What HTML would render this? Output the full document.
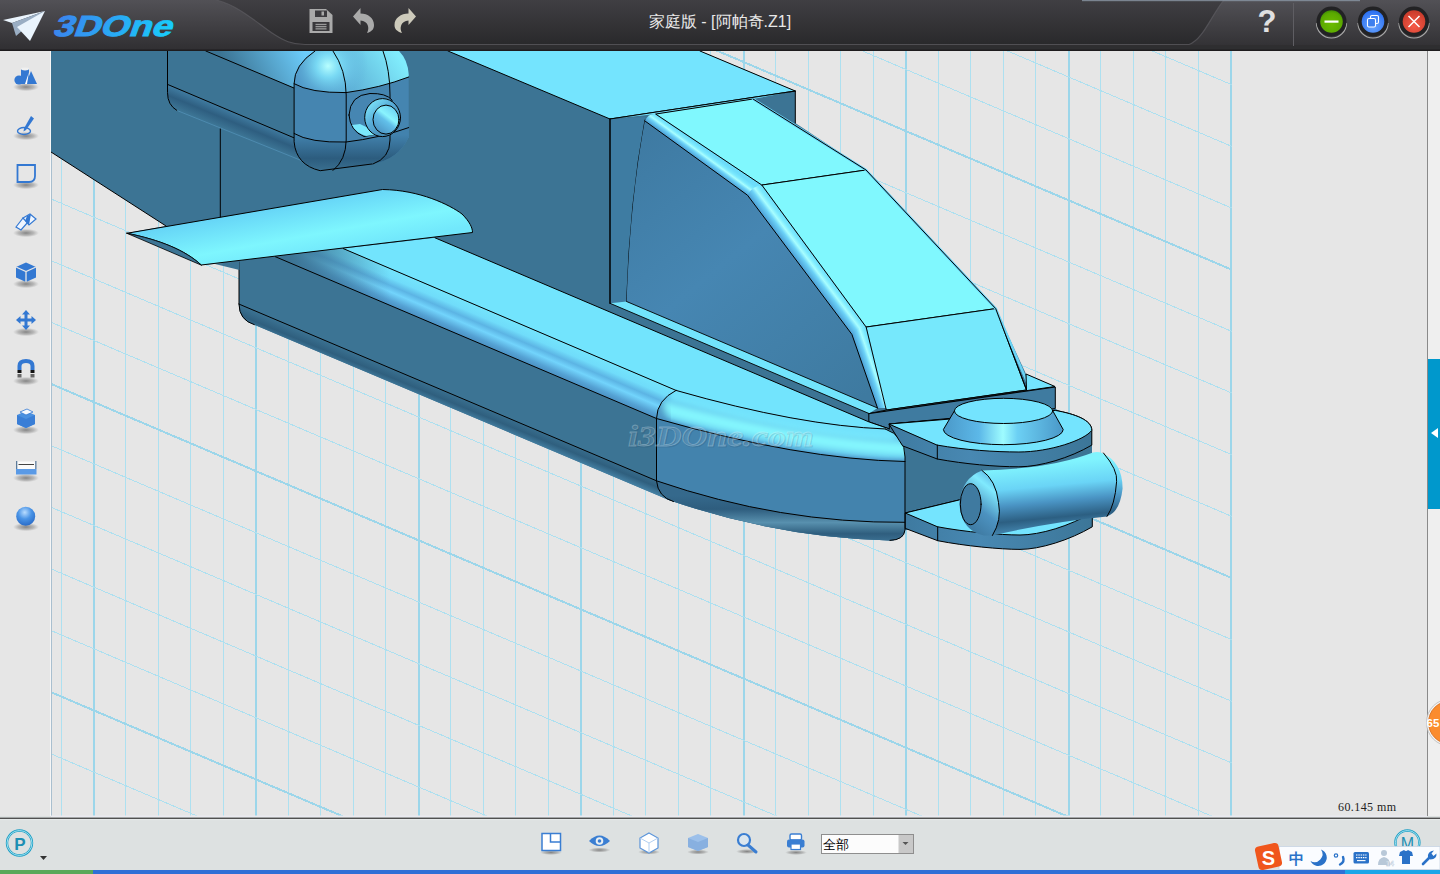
<!DOCTYPE html><html><head><meta charset="utf-8"><style>
html,body{margin:0;padding:0;}
body{width:1440px;height:874px;overflow:hidden;position:relative;background:#e6e6e6;font-family:"Liberation Sans",sans-serif;}
.abs{position:absolute;}
svg{position:absolute;left:0;top:0;}
</style></head><body>

<svg width="1440" height="874" viewBox="0 0 1440 874">
<defs></defs>

<rect x="0" y="0" width="1440" height="874" fill="#e6e6e6"/>
<clipPath id="vp"><rect x="51" y="51" width="1376.5" height="765"/></clipPath>
<g clip-path="url(#vp)">
<g shape-rendering="crispEdges">
<rect x="61" y="51" width="1" height="765" fill="#ade0f0"/>
<rect x="93" y="51" width="2" height="765" fill="#9cd6ea"/>
<rect x="125" y="51" width="1" height="765" fill="#ade0f0"/>
<rect x="158" y="51" width="1" height="765" fill="#ade0f0"/>
<rect x="190" y="51" width="1" height="765" fill="#ade0f0"/>
<rect x="223" y="51" width="1" height="765" fill="#ade0f0"/>
<rect x="255" y="51" width="2" height="765" fill="#9cd6ea"/>
<rect x="288" y="51" width="1" height="765" fill="#ade0f0"/>
<rect x="320" y="51" width="1" height="765" fill="#ade0f0"/>
<rect x="353" y="51" width="1" height="765" fill="#ade0f0"/>
<rect x="385" y="51" width="1" height="765" fill="#ade0f0"/>
<rect x="418" y="51" width="2" height="765" fill="#9cd6ea"/>
<rect x="450" y="51" width="1" height="765" fill="#ade0f0"/>
<rect x="483" y="51" width="1" height="765" fill="#ade0f0"/>
<rect x="515" y="51" width="1" height="765" fill="#ade0f0"/>
<rect x="548" y="51" width="1" height="765" fill="#ade0f0"/>
<rect x="580" y="51" width="2" height="765" fill="#9cd6ea"/>
<rect x="613" y="51" width="1" height="765" fill="#ade0f0"/>
<rect x="645" y="51" width="1" height="765" fill="#ade0f0"/>
<rect x="678" y="51" width="1" height="765" fill="#ade0f0"/>
<rect x="710" y="51" width="1" height="765" fill="#ade0f0"/>
<rect x="743" y="51" width="2" height="765" fill="#9cd6ea"/>
<rect x="775" y="51" width="1" height="765" fill="#ade0f0"/>
<rect x="808" y="51" width="1" height="765" fill="#ade0f0"/>
<rect x="840" y="51" width="1" height="765" fill="#ade0f0"/>
<rect x="873" y="51" width="1" height="765" fill="#ade0f0"/>
<rect x="905" y="51" width="2" height="765" fill="#9cd6ea"/>
<rect x="938" y="51" width="1" height="765" fill="#ade0f0"/>
<rect x="970" y="51" width="1" height="765" fill="#ade0f0"/>
<rect x="1003" y="51" width="1" height="765" fill="#ade0f0"/>
<rect x="1035" y="51" width="1" height="765" fill="#ade0f0"/>
<rect x="1068" y="51" width="2" height="765" fill="#9cd6ea"/>
<rect x="1100" y="51" width="1" height="765" fill="#ade0f0"/>
<rect x="1133" y="51" width="1" height="765" fill="#ade0f0"/>
<rect x="1165" y="51" width="1" height="765" fill="#ade0f0"/>
<rect x="1198" y="51" width="1" height="765" fill="#ade0f0"/>
<rect x="1230" y="51" width="2" height="765" fill="#9cd6ea"/>
<line x1="51" y1="-417.68" x2="1232" y2="84.84" stroke="#ade0f0" stroke-width="1"/>
<line x1="51" y1="-356.02" x2="1232" y2="146.50" stroke="#ade0f0" stroke-width="1"/>
<line x1="51" y1="-294.36" x2="1232" y2="208.16" stroke="#ade0f0" stroke-width="1"/>
<line x1="51" y1="-232.70" x2="1232" y2="269.82" stroke="#9cd6ea" stroke-width="2"/>
<line x1="51" y1="-171.04" x2="1232" y2="331.48" stroke="#ade0f0" stroke-width="1"/>
<line x1="51" y1="-109.38" x2="1232" y2="393.14" stroke="#ade0f0" stroke-width="1"/>
<line x1="51" y1="-47.72" x2="1232" y2="454.80" stroke="#ade0f0" stroke-width="1"/>
<line x1="51" y1="13.94" x2="1232" y2="516.46" stroke="#ade0f0" stroke-width="1"/>
<line x1="51" y1="75.60" x2="1232" y2="578.12" stroke="#9cd6ea" stroke-width="2"/>
<line x1="51" y1="137.26" x2="1232" y2="639.78" stroke="#ade0f0" stroke-width="1"/>
<line x1="51" y1="198.92" x2="1232" y2="701.44" stroke="#ade0f0" stroke-width="1"/>
<line x1="51" y1="260.58" x2="1232" y2="763.10" stroke="#ade0f0" stroke-width="1"/>
<line x1="51" y1="322.24" x2="1232" y2="824.76" stroke="#ade0f0" stroke-width="1"/>
<line x1="51" y1="383.90" x2="1232" y2="886.42" stroke="#9cd6ea" stroke-width="2"/>
<line x1="51" y1="445.56" x2="1232" y2="948.08" stroke="#ade0f0" stroke-width="1"/>
<line x1="51" y1="507.22" x2="1232" y2="1009.74" stroke="#ade0f0" stroke-width="1"/>
<line x1="51" y1="568.88" x2="1232" y2="1071.40" stroke="#ade0f0" stroke-width="1"/>
<line x1="51" y1="630.54" x2="1232" y2="1133.06" stroke="#ade0f0" stroke-width="1"/>
<line x1="51" y1="692.20" x2="1232" y2="1194.72" stroke="#9cd6ea" stroke-width="2"/>
<line x1="51" y1="753.86" x2="1232" y2="1256.38" stroke="#ade0f0" stroke-width="1"/>
<line x1="51" y1="815.52" x2="1232" y2="1318.04" stroke="#ade0f0" stroke-width="1"/>
</g>
<defs>
<linearGradient id="gWing" gradientUnits="userSpaceOnUse" x1="300" y1="200" x2="310" y2="255"><stop offset="0" stop-color="#64d2f6"/><stop offset="0.65" stop-color="#7ef6fe"/><stop offset="1" stop-color="#72e8fc"/></linearGradient>
<linearGradient id="gSide" gradientUnits="userSpaceOnUse" x1="640" y1="130" x2="860" y2="400"><stop offset="0" stop-color="#3e7aa2"/><stop offset="0.45" stop-color="#4686b2"/><stop offset="1" stop-color="#3e7aa0"/></linearGradient>
<linearGradient id="gRound" gradientUnits="userSpaceOnUse" x1="460" y1="298.3" x2="446.5" y2="330"><stop offset="0" stop-color="#74e4fc"/><stop offset="0.25" stop-color="#70dcfa"/><stop offset="0.45" stop-color="#5cb4e4"/><stop offset="0.62" stop-color="#72d4fc"/><stop offset="0.85" stop-color="#55a2d4"/><stop offset="1" stop-color="#4a8ec0"/></linearGradient>
<linearGradient id="gRoundFade" gradientUnits="userSpaceOnUse" x1="290" y1="0" x2="390" y2="0"><stop offset="0" stop-color="#3c7494" stop-opacity="1"/><stop offset="1" stop-color="#3c7494" stop-opacity="0"/></linearGradient>
<linearGradient id="gNoseTop" x1="0" y1="0" x2="0.15" y2="1"><stop offset="0" stop-color="#74e6fc"/><stop offset="0.4" stop-color="#80f4fe"/><stop offset="0.7" stop-color="#5cb4e4"/><stop offset="1" stop-color="#4a90c0"/></linearGradient>
<linearGradient id="gNoseBot" x1="0" y1="0.25" x2="0" y2="1"><stop offset="0" stop-color="#35698c"/><stop offset="0.3" stop-color="#2e5d7e"/><stop offset="0.6" stop-color="#5890ae"/><stop offset="0.85" stop-color="#2f5e7e"/><stop offset="1" stop-color="#3a6e90"/></linearGradient>
<linearGradient id="gBot" gradientUnits="userSpaceOnUse" x1="460" y1="395" x2="453" y2="412"><stop offset="0" stop-color="#3c7494"/><stop offset="0.55" stop-color="#2f5f7e"/><stop offset="1" stop-color="#4886aa"/></linearGradient>
<linearGradient id="gCanEdge" gradientUnits="userSpaceOnUse" x1="700" y1="165" x2="708" y2="154"><stop offset="0" stop-color="#56b4e6"/><stop offset="0.55" stop-color="#92faff"/><stop offset="1" stop-color="#6ad8fa"/></linearGradient>
<linearGradient id="gCanEdge2" gradientUnits="userSpaceOnUse" x1="870" y1="370" x2="885" y2="366"><stop offset="0" stop-color="#56b4e6"/><stop offset="0.55" stop-color="#a0fcff"/><stop offset="1" stop-color="#6ad8fa"/></linearGradient>
<linearGradient id="gCyl" gradientUnits="userSpaceOnUse" x1="1040" y1="464" x2="1046" y2="528"><stop offset="0" stop-color="#80f4fe"/><stop offset="0.35" stop-color="#6ad4f6"/><stop offset="0.6" stop-color="#4a94c4"/><stop offset="0.85" stop-color="#2c5f82"/><stop offset="1" stop-color="#3f7ea6"/></linearGradient>
<linearGradient id="gBoss" gradientUnits="userSpaceOnUse" x1="943" y1="0" x2="1063" y2="0"><stop offset="0" stop-color="#4a98c8"/><stop offset="0.3" stop-color="#5cb8e8"/><stop offset="0.5" stop-color="#9efcff"/><stop offset="0.62" stop-color="#6cd0f4"/><stop offset="1" stop-color="#4a98c8"/></linearGradient>
<linearGradient id="gPlateSide" x1="0" y1="0" x2="1" y2="0"><stop offset="0" stop-color="#3e7aa0"/><stop offset="0.4" stop-color="#4888b2"/><stop offset="1" stop-color="#3c7698"/></linearGradient>
<radialGradient id="gCapTop" gradientUnits="userSpaceOnUse" cx="328" cy="66" r="40"><stop offset="0" stop-color="#b8ffff" stop-opacity="1"/><stop offset="0.3" stop-color="#80e4fc" stop-opacity="0.8"/><stop offset="1" stop-color="#5aa8d8" stop-opacity="0"/></radialGradient>
<linearGradient id="gCapTopR" gradientUnits="userSpaceOnUse" x1="320" y1="95" x2="390" y2="45"><stop offset="0" stop-color="#4d94c4"/><stop offset="1" stop-color="#80ecfc"/></linearGradient>
<linearGradient id="gCapBot" gradientUnits="userSpaceOnUse" x1="0" y1="135" x2="0" y2="171"><stop offset="0" stop-color="#4282ad"/><stop offset="0.65" stop-color="#2c5c7e"/><stop offset="1" stop-color="#3a7090"/></linearGradient>
<linearGradient id="gPodBot" gradientUnits="userSpaceOnUse" x1="230" y1="111" x2="223" y2="128"><stop offset="0" stop-color="#3f7a9f"/><stop offset="0.5" stop-color="#2e5e80"/><stop offset="1" stop-color="#3c7494"/></linearGradient>
<linearGradient id="gPodTop" gradientUnits="userSpaceOnUse" x1="235" y1="80" x2="300" y2="45"><stop offset="0" stop-color="#3c7494"/><stop offset="1" stop-color="#6cccfa"/></linearGradient>
</defs>
<g stroke-linejoin="round" stroke-linecap="round">
<rect x="51" y="51" width="1" height="765" fill="#a9bfcf"/>
<!-- main dark silhouette -->
<path d="M51,51 L700,51 L795.3,91 L795.3,123 L866,170 L930,240 L995.7,308.6 L1026,374 L1055,386.5 L1055,408.6 L1092,430 L1092,527 L905,530 Q904,540 890,540.4 Q779,537.9 668,499.8 L660,496.3 L254.3,324.7 Q239,320 239,304 L239,262 L201,265 L127,233 L166,226 L51,152 Z" fill="#3c7494"/>
<!-- top cyan strip -->
<path d="M448,51 L700,51 L795.3,91 L610,119 Z" fill="#74e4fe"/>
<path d="M448,51 L610,119 L795.3,91 L795.3,123 M700,51 L795.3,91" fill="none" stroke="#000" stroke-width="1"/>
<!-- cockpit back wall -->
<path d="M610,119 L645,117 Q630,200 626.6,301.5 L610,303.3 Z" fill="#3e7ca2"/>
<path d="M610,119 L610,303.3 M645,120 Q630,200 626.6,301.5" fill="none" stroke="#000" stroke-width="1"/>
<!-- cockpit side face -->
<path d="M645,120 L747.5,195.2 L851.9,334.4 L877.5,408 L626.6,301.5 Q630,200 645,120 Z" fill="url(#gSide)"/>
<!-- sill -->
<path d="M610,303.3 L626.6,301.5 L877.5,408 L869.2,413.6 Z" fill="#72e4fc"/>
<path d="M610,303.3 L869.2,413.6 M626.6,301.5 L877.5,408" fill="none" stroke="#000" stroke-width="0.9"/>
<!-- canopy rounded edge -->
<defs><linearGradient id="gCE0" gradientUnits="userSpaceOnUse" x1="696.2" y1="158.1" x2="703.4" y2="148.3"><stop offset="0" stop-color="#4c9ed4"/><stop offset="0.35" stop-color="#6cd2f8"/><stop offset="0.55" stop-color="#a8feff"/><stop offset="0.75" stop-color="#7ceafe"/><stop offset="1" stop-color="#6cdcfa"/></linearGradient><linearGradient id="gCE1" gradientUnits="userSpaceOnUse" x1="799.7" y1="264.8" x2="814.0" y2="254.1"><stop offset="0" stop-color="#4c9ed4"/><stop offset="0.35" stop-color="#6cd2f8"/><stop offset="0.55" stop-color="#a8feff"/><stop offset="0.75" stop-color="#7ceafe"/><stop offset="1" stop-color="#6cdcfa"/></linearGradient><linearGradient id="gCE2" gradientUnits="userSpaceOnUse" x1="864.7" y1="371.2" x2="880.0" y2="365.9"><stop offset="0" stop-color="#4c9ed4"/><stop offset="0.35" stop-color="#6cd2f8"/><stop offset="0.55" stop-color="#a8feff"/><stop offset="0.75" stop-color="#7ceafe"/><stop offset="1" stop-color="#6cdcfa"/></linearGradient></defs>
<path d="M645,121 Q648,113 656,114 L762.2,185 L747.5,195.2 Z" fill="url(#gCE0)"/>
<path d="M747.5,195.2 Q752,186 762.2,185 L866.5,327 L851.9,334.4 Z" fill="url(#gCE1)"/>
<path d="M851.9,334.4 Q856,328 866.5,327 L886.7,408 L877.5,408 Z" fill="url(#gCE2)"/>
<path d="M645,121 L747.5,195.2 L851.9,334.4 L877.5,408" fill="none" stroke="#000" stroke-width="1"/>
<!-- canopy panels -->
<path d="M610,119 L656,114 L753,99 L795.3,91 Z" fill="#74e4fe"/>
<path d="M656,114 L753,99 L866,170 L762.2,185 Z" fill="#80f8fe" stroke="#000" stroke-width="1"/>
<path d="M762.2,185 L866,170 L995.7,308.6 L866.5,327 Z" fill="#80f8fe" stroke="#000" stroke-width="1"/>
<path d="M866.5,327 L995.7,308.6 L1026.5,390 L886.7,410 Z" fill="#76e8fc" stroke="#000" stroke-width="1"/>
<path d="M753,99 L866,170 L995.7,308.6 L1030,388.7" fill="none" stroke="#6ad4f6" stroke-width="2.5"/>
<path d="M753,99 L866,170 L995.7,308.6 L1026.5,390" fill="none" stroke="#000" stroke-width="1"/>
<path d="M610,119 L795.3,91 M610,119 L610,303.3" fill="none" stroke="#000" stroke-width="1"/>
<!-- base plate -->
<path d="M869.2,413.6 L1055,386.5 L1026,374 L1026.5,390 L886.7,410 Z" fill="#74e4fe" stroke="#000" stroke-width="1"/>
<path d="M869.2,413.6 L1055.3,387 L1055.3,408.6 L889.3,424 L889.3,428.9 L869.2,421.9 Z" fill="#3f7ba0" stroke="#000" stroke-width="1"/>

<!-- ===== lower fuselage ===== -->
<!-- dark strip between sill and top surface is base color -->
<!-- top surface -->
<path d="M435,237.8 L869.2,422 L889.3,428.9 L887.2,429 Q799.3,425.7 676,390.4 L343.3,248.6 Z" fill="#72e4fd"/>
<path d="M435,237.8 L869.2,422 L889.3,428.9" fill="none" stroke="#000" stroke-width="1"/>
<!-- rounded edge (fuselage) -->
<path d="M343.3,248.6 L676,390.4 L656.5,418.5 L275.3,256.7 Z" fill="url(#gRound)"/>
<path d="M275.3,256.7 L343.3,248.6 L440,290 L440,340 Z" fill="url(#gRoundFade)"/>
<!-- nose segment -->
<clipPath id="cpNose"><path d="M676,390.4 Q799.3,425.7 885.4,429 Q905,436 905,457 L905,461.5 Q799.3,459.4 656.5,418.5 Q657,400 676,390.4 Z"/></clipPath>
<filter id="fb4" x="-20%" y="-50%" width="140%" height="200%"><feGaussianBlur stdDeviation="4"/></filter>
<filter id="fb2" x="-20%" y="-50%" width="140%" height="200%"><feGaussianBlur stdDeviation="2"/></filter>
<g clip-path="url(#cpNose)">
<rect x="650" y="385" width="260" height="80" fill="#60bfea"/>
<path d="M676,394 Q799.3,429 890,433" fill="none" stroke="#72e2fc" stroke-width="14" filter="url(#fb2)"/>
<path d="M662,408 Q799.3,444 905,449" fill="none" stroke="#86faff" stroke-width="14" filter="url(#fb4)"/>
<path d="M656,421 Q799.3,462 905,464" fill="none" stroke="#4a8ec0" stroke-width="8" filter="url(#fb2)"/>
<path d="M654,392 Q658,420 668,432" fill="none" stroke="#4a90c0" stroke-width="12" filter="url(#fb4)"/>
</g>
<path d="M656.5,418.5 Q799.3,459.4 905,461.5 L904.5,522.3 Q780.5,523.45 656.5,480.8 Z" fill="#4383ad"/>
<!-- bottom rounded strip -->
<path d="M238.8,304 L656.5,480.8 Q780.5,523.45 904.5,522.3 L905,530 Q904,540 890,540.4 Q779,537.9 668,499.8 L660,496.3 L254.3,324.7 Q239,320 238.8,304 Z" fill="url(#gBot)"/>
<path d="M656.5,480.8 Q780.5,523.45 904.5,522.3 L905,530 Q904,540 890,540.4 Q779,537.9 668,499.8 Q659,494 656.5,480.8 Z" fill="url(#gNoseBot)"/>
<!-- lines -->
<path d="M343.3,248.6 L676,390.4 Q799.3,425.7 885.4,429" fill="none" stroke="#000" stroke-width="1"/>
<path d="M275.3,256.7 L656.5,418.5 Q799.3,459.4 905,461.5" fill="none" stroke="#000" stroke-width="1"/>
<path d="M238.8,304 L656.5,480.8 Q780.5,523.45 904.5,522.3" fill="none" stroke="#000" stroke-width="1"/>
<path d="M676,390.4 Q657,400 656.5,418.5 L656.5,480.8 Q658,497 673.5,501.6" fill="none" stroke="#000" stroke-width="1"/>
<path d="M885.4,429 Q905,436 905,457 L905,530 Q904,540 890,540.4" fill="none" stroke="#000" stroke-width="1"/>
<path d="M239,262 L239,304 Q239,320 254.3,324.7" fill="none" stroke="#000" stroke-width="1"/>

<!-- ===== right assembly ===== -->
<!-- lower plate -->
<path d="M905.6,512.9 L959.4,499.9 L1092.3,470 L1092.3,526.8 C1070,540 1040,549.4 1020,549.4 C1000,549.4 965,546 937.7,540.7 L905.6,528.5 Z" fill="url(#gPlateSide)" stroke="#000" stroke-width="1"/>
<path d="M905.6,512.9 L959.4,499.9 L1092.3,470 L1092.3,512.5 C1070,526 1040,535 1020,535 C1000,535 965,532 937.7,526.8 Z" fill="#74e4fe" stroke="#000" stroke-width="1"/>
<line x1="937.7" y1="526.8" x2="937.7" y2="540.7" stroke="#000" stroke-width="1"/>
<!-- upper plate -->
<path d="M889.3,424 L1055.3,410.4 C1075,414 1091.8,420 1091.8,430.3 L1091.8,445.1 C1070,458 1040,466.8 1018.9,466.8 C995,466.8 965,464 937.3,459 L903,446 Z" fill="url(#gPlateSide)" stroke="#000" stroke-width="1"/>
<path d="M889.3,424 L1055.3,410.4 C1075,414 1091.8,420 1091.8,430.3 C1085,440 1050,452 1018.9,452 C995,452 965,450 937.3,445.1 Z" fill="#74e4fe" stroke="#000" stroke-width="1"/>
<line x1="937.3" y1="445.1" x2="937.3" y2="459" stroke="#000" stroke-width="1"/>
<!-- boss -->
<path d="M954.4,410.9 L943.4,429.5 A59.9,15.2 0 0 0 1063.2,429.5 L1052.8,410.9 Z" fill="url(#gBoss)" stroke="#000" stroke-width="1"/>
<ellipse cx="1003.6" cy="410.9" rx="49.2" ry="12.6" fill="#74e4fe" stroke="#000" stroke-width="1"/>
<!-- cylinder -->
<path d="M982,470.4 Q1050,469 1093,452.5 Q1098,451.5 1102,453 Q1122.6,462 1122.6,488.6 Q1120,512 1107,516.4 Q1050,522 992.4,535.5 Z" fill="url(#gCyl)"/>
<path d="M1103.5,453 Q1118,470 1116.6,481.7 Q1115,505 1107,516.4" fill="none" stroke="#000" stroke-width="1"/>
<defs><linearGradient id="gCap" gradientUnits="userSpaceOnUse" x1="960" y1="530" x2="1000" y2="480"><stop offset="0" stop-color="#3a7298"/><stop offset="0.45" stop-color="#4c92c0"/><stop offset="0.8" stop-color="#80eafe"/><stop offset="1" stop-color="#5cb6e6"/></linearGradient></defs>
<path d="M982,470.4 Q962,478 959.4,502 Q960,530 983.75,535.5 L992.4,535.5 Q1002,520 998.5,502.5 Q996,480 982,470.4 Z" fill="url(#gCap)"/>

<path d="M982,470.4 Q996,480 998.5,502.5 Q1002,520 992.4,535.5" fill="none" stroke="#000" stroke-width="1"/>
<ellipse cx="970.7" cy="504.2" rx="10.4" ry="20.5" fill="#3f7aa0" stroke="#000" stroke-width="1"/>

<!-- ===== pod ===== -->
<path d="M205.8,51 L330,51 L330,92 L294.2,88.1 Z" fill="url(#gPodTop)"/>
<path d="M167.5,84.4 L294.2,137.9 L310,164 L176.8,110.4 Q167.5,105 167.5,92.6 Z" fill="url(#gPodBot)"/>
<path d="M176.8,110.4 L310,164" stroke="#5a9cc4" stroke-width="0.8" opacity="0.7"/>
<path d="M167.5,51 L167.5,92.6 Q167.5,105 176.8,110.4" fill="none" stroke="#000" stroke-width="1"/>
<path d="M205.8,51 L294.2,88.1 M167.5,84.4 L294.2,137.9" stroke="#000" stroke-width="1"/>
<!-- capsule -->
<path d="M315,51 Q294.1,65 294.1,83.7 L294.1,141.7 Q296,165 320.2,170.7 L372,164 Q398,160 408.7,137.3 L408.7,74.8 Q408,60 399,51 Z" fill="#4585b0"/>
<path d="M315,51 Q294.1,65 294.1,83.7 Q310,93 346,92.6 Q380,88 408.7,77 L408.7,74.8 Q408,60 399,51 Z" fill="url(#gCapTopR)"/>
<path d="M315,51 Q294.1,65 294.1,83.7 Q310,93 346,92.6 Q380,88 408.7,77 L408.7,74.8 Q408,60 399,51 Z" fill="url(#gCapTop)"/>
<path d="M294.1,133.5 Q310,143 346,142 Q380,138 408.7,127.6 L408.7,137.3 Q398,160 372,164 L320.2,170.7 Q296,165 294.1,141.7 Z" fill="url(#gCapBot)"/>
<path d="M315,51 Q294.1,65 294.1,83.7 L294.1,141.7 Q296,165 320.2,170.7 L372,164" fill="none" stroke="#000" stroke-width="1"/>
<path d="M333,51 Q346,70 346.2,95 L346.2,140 Q346,160 333,170.5" fill="none" stroke="#000" stroke-width="1"/>
<path d="M383,51 Q390,70 390,95 L390,140 Q390,158 373,164" fill="none" stroke="#000" stroke-width="1"/>
<path d="M294.1,83.7 Q310,93 346,92.6 Q380,88 408.7,77" fill="none" stroke="#000" stroke-width="1"/>
<path d="M294.1,133.5 Q310,143 346,142 Q380,138 408.7,127.6" fill="none" stroke="#000" stroke-width="1"/>
<!-- nozzle -->
<defs>
<linearGradient id="gNozIn" gradientUnits="userSpaceOnUse" x1="376" y1="132" x2="396" y2="106"><stop offset="0" stop-color="#4a90c0"/><stop offset="0.45" stop-color="#62c0ea"/><stop offset="0.6" stop-color="#8af4fe"/><stop offset="1" stop-color="#64c8f0"/></linearGradient>
<linearGradient id="gNozRing" gradientUnits="userSpaceOnUse" x1="368" y1="102" x2="398" y2="134"><stop offset="0" stop-color="#7ee8fc"/><stop offset="0.4" stop-color="#58acd8"/><stop offset="1" stop-color="#3f7ca4"/></linearGradient>
</defs>
<path d="M349,115 Q350,95 370,93.5 Q386,93 392,100 L392,131 L364,136.5 Q350,131 349,115 Z" fill="#4686b2" stroke="#000" stroke-width="1"/>
<path d="M352,125 Q356,133 366,136 L382,134 Q372,130 360,124 Z" fill="#7ae8fc"/>
<ellipse cx="382.6" cy="117.6" rx="17.9" ry="19" fill="url(#gNozRing)" stroke="#000" stroke-width="1"/>
<ellipse cx="386" cy="119.6" rx="13" ry="14.5" fill="url(#gNozIn)" stroke="#000" stroke-width="1"/>
<!-- vertical line under pod -->
<line x1="220.3" y1="129" x2="220.3" y2="218" stroke="#000" stroke-width="1"/>
<!-- body lower-left edge line -->
<line x1="51" y1="152" x2="166" y2="226" stroke="#000" stroke-width="1"/>

<!-- ===== wing ===== -->
<path d="M215,264 L239.5,261 L239.5,270 Z" fill="#3c7494"/>
<path d="M127,233.25 L382.5,189.5 C420,190 450,205 462,214 C470,222 472.5,228 472.5,232.5 L201.25,265 C185,250 160,240 127,233.25 Z" fill="url(#gWing)" stroke="#000" stroke-width="1"/>
<path d="M127,233.25 C160,240 185,250 201.25,265 Z" fill="#3c7494" stroke="#000" stroke-width="0.8"/>
</g>
<!-- watermark -->
<text x="629" y="446.5" font-family="Liberation Serif" font-style="italic" font-weight="bold" font-size="29" fill="none" stroke="#17324a" stroke-opacity="0.15" stroke-width="1.2" textLength="185" lengthAdjust="spacingAndGlyphs">i3DOne.com</text>
<text x="628" y="445.5" font-family="Liberation Serif" font-style="italic" font-weight="bold" font-size="29" fill="#dcecf4" fill-opacity="0.10" stroke="#e8f4fa" stroke-opacity="0.28" stroke-width="0.9" textLength="185" lengthAdjust="spacingAndGlyphs">i3DOne.com</text>

</g>
<!-- ===== title bar ===== -->
<defs>
<linearGradient id="tbL" x1="0" y1="0" x2="0" y2="1"><stop offset="0" stop-color="#525156"/><stop offset="1" stop-color="#302f32"/></linearGradient>
<linearGradient id="tbM" x1="0" y1="0" x2="0" y2="1"><stop offset="0" stop-color="#403f43"/><stop offset="1" stop-color="#29292b"/></linearGradient>
<linearGradient id="logoG" x1="0" y1="0" x2="1" y2="0"><stop offset="0" stop-color="#3a86ee"/><stop offset="1" stop-color="#18cdfb"/></linearGradient>
<radialGradient id="btnG" cx="0.5" cy="0.6" r="0.6"><stop offset="0" stop-color="#6cbc00"/><stop offset="0.8" stop-color="#5aa800"/><stop offset="1" stop-color="#3f8a06"/></radialGradient>
<radialGradient id="btnB" cx="0.5" cy="0.7" r="0.7"><stop offset="0" stop-color="#6aa6ff"/><stop offset="1" stop-color="#2a6ef0"/></radialGradient>
<radialGradient id="btnR" cx="0.5" cy="0.7" r="0.7"><stop offset="0" stop-color="#f65a48"/><stop offset="1" stop-color="#c83a2a"/></radialGradient>
</defs>
<rect x="0" y="0" width="1440" height="51" fill="#38373a"/>
<path d="M0,0 H1440 V50 H0 Z" fill="url(#tbL)"/>
<path d="M216,0 C240,6 258,24 272,33 C284,41 292,44.5 305,44.5 L1189,44.5 C1203,40 1212,14 1224,0 Z" fill="url(#tbM)"/>
<path d="M216,0 C240,6 258,24 272,33 C284,41 292,44.5 305,44.5 L1189,44.5 C1203,40 1212,14 1224,0" fill="none" stroke="#59585d" stroke-width="1.2" opacity="0.8"/>
<rect x="290" y="45.2" width="1150" height="4.5" fill="#2e2e30"/>
<rect x="0" y="49.5" width="1440" height="1.5" fill="#1e1c1e"/>
<line x1="1293.5" y1="3" x2="1293.5" y2="46" stroke="#5f5e63" stroke-width="1"/>
<!-- paper plane -->
<polygon points="3,20 45,11 12,23" fill="#eaf4fd"/>
<polygon points="12,23 45,11 16,36" fill="#9aaec4"/>
<polygon points="17,27 45,11 30,41" fill="#eaf4fd"/>
<!-- 3DOne text -->
<text x="0" y="0" font-family="Liberation Sans" font-weight="bold" font-size="29" fill="url(#logoG)" stroke="url(#logoG)" stroke-width="0.9" transform="translate(52,36) skewX(-20) scale(1.08,1)" textLength="110" lengthAdjust="spacingAndGlyphs">3DOne</text>
<!-- save -->
<path d="M309.5,9 H326 L332.5,15 V33 H309.5 Z" fill="#aaaaaa"/>
<rect x="315" y="10.5" width="12" height="6.5" fill="#3d3c40"/>
<rect x="321.5" y="11.5" width="2.5" height="4" fill="#aaaaaa"/>
<rect x="312.5" y="22" width="17" height="9" fill="#39383b"/>
<rect x="315.5" y="23.8" width="11" height="1.3" fill="#9a9a9a"/><rect x="315.5" y="26" width="11" height="1.3" fill="#9a9a9a"/><rect x="315.5" y="28.2" width="11" height="1.3" fill="#9a9a9a"/>
<!-- undo -->
<path d="M353,16.5 L360.5,8 V13.5 C368,13.5 374,18 374,25 C374,29 372,31.5 367,33 C370,28 368,21 360.5,20.5 V25 Z" fill="#aaaaaa"/>
<!-- redo -->
<path d="M416,16.5 L408.5,8 V13.5 C401,13.5 394.5,18 394.5,25 C394.5,29 397,31.5 402,33 C399,28 401,21 408.5,20.5 V25 Z" fill="#cdcabb"/>
<!-- title -->
<text x="720" y="27" text-anchor="middle" font-family="Liberation Sans" font-size="16" fill="#e8e8e8">家庭版 - [阿帕奇.Z1]</text>
<!-- help -->
<text x="1267" y="32" text-anchor="middle" font-family="Liberation Sans" font-weight="bold" font-size="31" fill="#e0e0e0">?</text>
<!-- buttons -->
<rect x="1082" y="0" width="278" height="1.2" fill="#8a96a4" opacity="0.8"/>
<g>
<path d="M1316.5,23 A15,15 0 0 0 1346.5,23" fill="none" stroke="#a8a8a8" stroke-width="1.2"/>
<circle cx="1331.5" cy="21.5" r="15" fill="#222224"/>
<circle cx="1331.5" cy="21.5" r="11.3" fill="url(#btnG)"/><rect x="1324.5" y="20.5" width="14" height="2.2" fill="#fff"/>
<path d="M1358.0,23 A15,15 0 0 0 1388.0,23" fill="none" stroke="#a8a8a8" stroke-width="1.2"/>
<circle cx="1373" cy="21.5" r="15" fill="#222224"/>
<circle cx="1373" cy="21.5" r="11.3" fill="url(#btnB)"/>
<rect x="1370.5" y="15.5" width="8" height="8" rx="1.5" fill="none" stroke="#fff" stroke-width="1.1"/>
<rect x="1367.5" y="18.5" width="8" height="8.5" rx="1.5" fill="#3f80ee" stroke="#fff" stroke-width="1.1"/>
<path d="M1399.0,23 A15,15 0 0 0 1429.0,23" fill="none" stroke="#a8a8a8" stroke-width="1.2"/>
<circle cx="1414" cy="21.5" r="15" fill="#222224"/>
<circle cx="1414" cy="21.5" r="11.3" fill="url(#btnR)"/>
<path d="M1408.5,16 L1419.5,27 M1419.5,16 L1408.5,27" stroke="#fff" stroke-width="1.5"/>
</g>

<!-- ===== left toolbar ===== -->
<rect x="0" y="51" width="51" height="766" fill="#e6e6e6"/>
<rect x="50" y="51" width="1" height="766" fill="#f6f6f6"/>
<!-- right strip -->
<rect x="1428" y="51" width="12" height="766" fill="#efefef"/>
<rect x="1427" y="51" width="1" height="766" fill="#8a8a8a"/>
<rect x="1428" y="359" width="12" height="150" fill="#0098cc"/>
<polygon points="1431,433 1438,428 1438,438" fill="#fff"/>
<circle cx="1450" cy="722.5" r="23.5" fill="#f4f4f4" stroke="#b8b8b8" stroke-width="0.8"/>
<circle cx="1450" cy="722.5" r="21.5" fill="#fb8c2e" stroke="#d46a18" stroke-width="0.8"/>
<text x="1426.5" y="727" font-family="Liberation Sans" font-weight="bold" font-size="11.5" fill="#fff">65</text>

<!-- ===== bottom bar ===== -->
<rect x="0" y="816" width="1440" height="58" fill="#dde1e1"/>
<rect x="51" y="815.5" width="1376" height="1.5" fill="#eaeaf0"/>
<rect x="0" y="817.6" width="1440" height="1.5" fill="#505050"/>
<rect x="0" y="819.1" width="1440" height="1" fill="#e8ecec"/>
<rect x="0" y="870" width="1440" height="4" fill="#2f6fd6"/>
<rect x="0" y="870" width="93" height="4" fill="#5aa85a"/>
<rect x="1345" y="870" width="95" height="4" fill="#1aa6e8"/>
<!-- P icon -->
<circle cx="19.5" cy="843" r="12.5" fill="none" stroke="#1e9fc4" stroke-width="2.4"/>
<circle cx="19.5" cy="843" r="12.5" fill="none" stroke="#bff0fb" stroke-width="0.8"/>
<text x="19.8" y="849.5" text-anchor="middle" font-family="Liberation Sans" font-weight="bold" font-size="17" fill="#1d8fb3">P</text>
<polygon points="40,856 47,856 43.5,860" fill="#333"/>
<!-- ===== left toolbar icons ===== -->
<defs>
<radialGradient id="shd" cx="0.5" cy="0.5" r="0.5"><stop offset="0" stop-color="#7a7a7a" stop-opacity="0.9"/><stop offset="0.6" stop-color="#8a8a8a" stop-opacity="0.5"/><stop offset="1" stop-color="#9a9a9a" stop-opacity="0"/></radialGradient>
<radialGradient id="sph" cx="0.45" cy="0.3" r="0.7"><stop offset="0" stop-color="#b8dcff"/><stop offset="0.5" stop-color="#4a94e6"/><stop offset="1" stop-color="#2a6cc8"/></radialGradient>
</defs>
<g fill="#3378d2">
<ellipse cx="26" cy="87" rx="13" ry="4.2" fill="url(#shd)"/>
<circle cx="19" cy="80" r="4.6"/>
<rect x="21" y="69" width="8" height="15"/><ellipse cx="25" cy="69" rx="4" ry="1.4" fill="#f0f0f0"/>
<polygon points="31,71 37,84 26,84"/><polygon points="29,72 27,84 25,84" fill="#fff"/>
<ellipse cx="26" cy="136" rx="13" ry="4.2" fill="url(#shd)"/>
<ellipse cx="24" cy="131" rx="6.5" ry="3.5" fill="none" stroke="#3378d2" stroke-width="1.4"/>
<path d="M31,116 L34,118.5 L26,130 L23.5,131.5 L24,128.5 Z"/>
<ellipse cx="26" cy="185" rx="13" ry="4.2" fill="url(#shd)"/>
<path d="M17.5,165 H35 V176 Q35,182 29,182 H17.5 Z" fill="none" stroke="#3378d2" stroke-width="1.8"/>
<ellipse cx="26" cy="233" rx="13" ry="4.2" fill="url(#shd)"/>
<path d="M16,227 L23,218 L28,222 L21,230 Z" fill="#eef5ff" stroke="#3378d2" stroke-width="1.2"/>
<path d="M23,218 L30,214 L36,219 L29,225 Z" fill="#eef5ff" stroke="#3378d2" stroke-width="1.2"/>
<path d="M27,216 L31,214 L29,225 L25,221 Z"/>
<ellipse cx="26" cy="284" rx="13" ry="4.2" fill="url(#shd)"/>
<polygon points="26,262.5 36,267 36,277.5 26,282 16,277.5 16,267"/>
<path d="M16,267 L26,271.5 L36,267 M26,271.5 V282" fill="none" stroke="#e6e6e6" stroke-width="1.3"/>
<ellipse cx="26" cy="332" rx="13" ry="4.2" fill="url(#shd)"/>
<path d="M26,310 L30,314.5 H27.5 V318.5 H31.5 V316 L36,320 L31.5,324 V321.5 H27.5 V325.5 H30 L26,330 L22,325.5 H24.5 V321.5 H20.5 V324 L16,320 L20.5,316 V318.5 H24.5 V314.5 H22 Z"/>
<ellipse cx="26" cy="381" rx="13" ry="4.2" fill="url(#shd)"/>
<path d="M17.5,370 V366 Q17.5,359 26,359 Q34.5,359 34.5,366 V370 H30.5 V366 Q30.5,363 26,363 Q21.5,363 21.5,366 V370 Z"/>
<rect x="17.5" y="370" width="4" height="3" fill="#111"/><rect x="30.5" y="370" width="4" height="3" fill="#111"/>
<rect x="17.5" y="374" width="4" height="3.5" fill="#666"/><rect x="30.5" y="374" width="4" height="3.5" fill="#666"/>
<ellipse cx="26" cy="430" rx="13" ry="4.2" fill="url(#shd)"/>
<polygon points="17,415 26,411 35,415 35,424 26,428 17,424" fill="#4a90e0"/>
<polygon points="17,415 26,419 35,415 35,424 26,428 17,424" fill="#3a7ed6"/>
<polygon points="20,412 27,409 33,412 26,415" fill="#f4f8ff" stroke="#3378d2" stroke-width="0.8"/>
<ellipse cx="26" cy="478" rx="13" ry="4.2" fill="url(#shd)"/>
<rect x="16" y="469" width="20.5" height="5.5" fill="#5a9ae6"/>
<rect x="16" y="461.5" width="20.5" height="7.5" fill="#fafafa"/>
<rect x="16" y="461" width="1.3" height="8" fill="#5c7b9a"/><rect x="35.2" y="461" width="1.3" height="8" fill="#5c7b9a"/>
<line x1="18.5" y1="464.5" x2="34" y2="464.5" stroke="#444" stroke-width="1"/>
<ellipse cx="26" cy="527" rx="13" ry="4.2" fill="url(#shd)"/>
<circle cx="25.7" cy="516.2" r="9.5" fill="url(#sph)"/>
</g>

<!-- ===== bottom bar icons ===== -->
<g>
<ellipse cx="551" cy="852.5" rx="11" ry="2.5" fill="url(#shd)"/>
<rect x="542" y="833.5" width="18.5" height="17" fill="#fff" stroke="#3a7ed2" stroke-width="1.5"/>
<path d="M550.5,833.5 V842 H560.5" fill="none" stroke="#3a7ed2" stroke-width="1.5"/>
<ellipse cx="599.5" cy="850" rx="11" ry="2.5" fill="url(#shd)"/>
<path d="M589,841 Q599.5,830 610,841 Q599.5,851 589,841 Z" fill="#3a7ed2"/>
<circle cx="599.5" cy="841" r="3.8" fill="#e8eef2"/><circle cx="599.5" cy="841" r="1.8" fill="#3a7ed2"/>
<ellipse cx="649" cy="852" rx="11" ry="2.5" fill="url(#shd)"/>
<polygon points="649,833 658,838 658,848 649,853 640,848 640,838" fill="#fff" stroke="#5a94da" stroke-width="1.2"/>
<path d="M640,838 L649,843 L658,838 M649,843 V853" fill="none" stroke="#a8c8ee" stroke-width="0.9"/>
<ellipse cx="698" cy="852" rx="11" ry="2.5" fill="url(#shd)"/>
<polygon points="688,838 698,834 708,838 708,847 698,851 688,847" fill="#9cc0ea"/>
<polygon points="688,838 698,842 708,838 708,847 698,851 688,847" fill="#88b0e0"/>
<ellipse cx="747" cy="851.5" rx="11" ry="2.5" fill="url(#shd)"/>
<circle cx="744" cy="840" r="6" fill="#dbe6ee" stroke="#3a7ed2" stroke-width="2.2"/>
<line x1="748" y1="845" x2="756" y2="852" stroke="#3a7ed2" stroke-width="3" stroke-linecap="round"/>
<ellipse cx="796" cy="852.5" rx="11" ry="2.5" fill="url(#shd)"/>
<rect x="790" y="834" width="11.5" height="6" rx="1.5" fill="#fff" stroke="#3a7ed2" stroke-width="1.4"/>
<rect x="787" y="839.5" width="17.5" height="8" rx="2" fill="#3a7ed2"/>
<rect x="791" y="844" width="9.5" height="5.5" fill="#fff" stroke="#3a7ed2" stroke-width="1.2"/>
<!-- dropdown -->
<rect x="821.5" y="834.5" width="92" height="19" fill="#fcfcfc" stroke="#8e8e8e" stroke-width="1"/>
<rect x="898.5" y="835" width="14.5" height="18" fill="#c8c8c8"/>
<polygon points="902.5,842 908.5,842 905.5,845" fill="#555"/>
<text x="823" y="849" font-family="Liberation Sans" font-size="13" fill="#000">全部</text>
</g>
<!-- scale text -->
<text x="1338" y="810.5" font-family="Liberation Serif" font-size="12" fill="#222" textLength="58" lengthAdjust="spacing">60.145 mm</text>
<!-- M icon -->
<circle cx="1407.4" cy="842.5" r="12" fill="none" stroke="#1e9fc4" stroke-width="2.4"/>
<circle cx="1407.4" cy="842.5" r="12" fill="none" stroke="#bff0fb" stroke-width="0.8"/>
<text x="1407.4" y="849" text-anchor="middle" font-family="Liberation Sans" font-size="16" fill="#1d8fb3">M</text>
<!-- IME bar -->
<rect x="1279" y="846.5" width="161" height="23" fill="#fafcff" stroke="#c8d4e4" stroke-width="0.8"/>
<g transform="rotate(-12 1268.5 856.5)"><rect x="1256.5" y="844.5" width="24" height="24" rx="4" fill="#f0561c"/></g>
<text x="1268.5" y="864.5" text-anchor="middle" font-family="Liberation Sans" font-weight="bold" font-size="20" fill="#fff">S</text>
<text x="1296" y="864" text-anchor="middle" font-family="Liberation Sans" font-weight="bold" font-size="15" fill="#2a72c8">中</text>
<path d="M1321,849.5 A8.5,8.5 0 1 1 1310.5,861 A8,8 0 0 0 1321,849.5 Z" fill="#2a72c8"/>
<circle cx="1336" cy="855.5" r="1.7" fill="none" stroke="#2a72c8" stroke-width="1.2"/>
<path d="M1343,857 Q1345,862 1340,864.5" fill="none" stroke="#2a72c8" stroke-width="2.4" stroke-linecap="round"/>
<rect x="1353.5" y="852" width="15.5" height="11.5" rx="1.5" fill="#2a72c8"/>
<path d="M1356,855 H1366.5 M1356,857.6 H1366.5" stroke="#fff" stroke-width="1.1" stroke-dasharray="1.5 0.8"/>
<path d="M1357,860.6 H1365.5" stroke="#fff" stroke-width="1.1"/>
<circle cx="1384" cy="853" r="3" fill="#b8c8d8"/><path d="M1378,865 Q1378,858 1384,857 Q1390,858 1390,865 Z" fill="#b8c8d8"/>
<text x="1386" y="866" font-family="Liberation Sans" font-weight="bold" font-size="7" fill="#fff" stroke="#b8c8d8" stroke-width="0.4">14</text>
<path d="M1400,852 L1404,850 Q1406,852 1408,850 L1412,852 L1413,856 L1410,856 V864 H1402 V856 H1399 Z" fill="#2a72c8"/>
<path d="M1423,864 L1430,857" stroke="#2a72c8" stroke-width="2.6" stroke-linecap="round"/><path d="M1428,858 Q1427,851 1434,850.5 L1431.5,853.5 L1433.5,856 L1436.5,853.5 Q1437,859 1430.5,859.5 Z" fill="#2a72c8"/>

</svg>

</body></html>
